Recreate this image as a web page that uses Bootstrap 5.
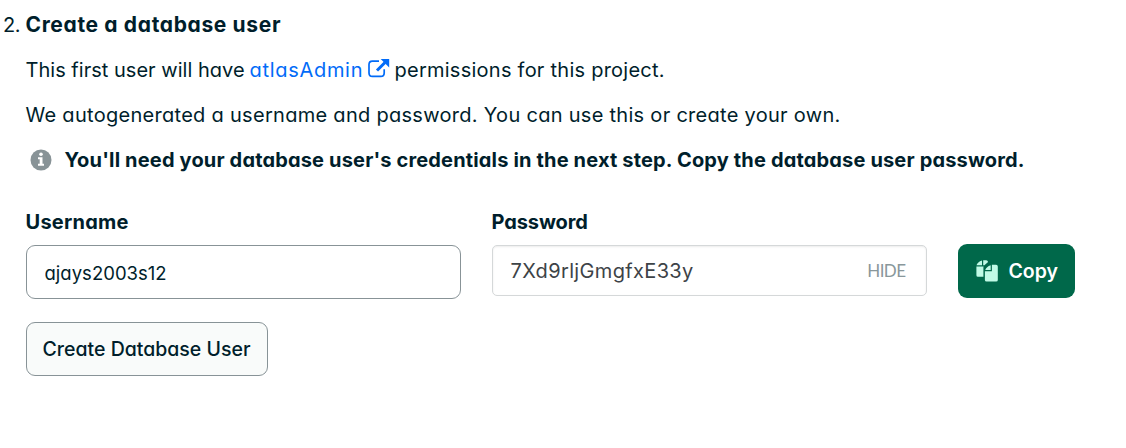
<!DOCTYPE html>
<html lang="en">
<head>
<meta charset="utf-8">
<title>Create a database user</title>
<link href="https://cdn.jsdelivr.net/npm/bootstrap@5.3.0/dist/css/bootstrap.min.css" rel="stylesheet">
<style>
body{font-family:Inter,"Liberation Sans",sans-serif;font-feature-settings:"cv11";font-size:20px;color:#001e2b;background:#fff;white-space:nowrap}
input,button{font-feature-settings:inherit}
.step{padding:2px 0 0 3px}
.step-number{width:22.5px;font-size:20px;letter-spacing:-.5px}
.line{height:45px;line-height:46px;margin:0}
.title-line{font-size:21px;letter-spacing:.65px;font-weight:700;line-height:45px}
.intro{width:224px;letter-spacing:.02px}
.doc-link{color:#016bf8;width:145px;letter-spacing:.7px}
.doc-link svg{margin:-1px 0 0 5px}
.perm{letter-spacing:.25px}
.auto{letter-spacing:.29px}
.note{letter-spacing:.16px;font-weight:700}
.note svg{margin:0 12.5px 0 4.5px}
.fields{margin-top:29px;gap:31px}
.field{width:435px}
.field label{height:34px;line-height:22px;font-weight:700;letter-spacing:.25px}
.field .pass-label{letter-spacing:-.1px}
.user-input{height:54px;border:1px solid #889397;border-radius:9px;padding:2px 18px 0;font-size:18.5px;letter-spacing:.02px;color:#001e2b}
.pass-box{height:51px;border:1px solid #d5d8d9;border-radius:5px;box-shadow:inset 0 1px 2px rgba(0,0,0,.08);padding:0 20px 0 18px;color:#3d4347}
.pass-box .secret{letter-spacing:.35px}
.hide-btn{font-family:Lato,sans-serif;font-size:17px;letter-spacing:-.55px;color:#89979b}
.copy-btn{width:117px;height:54px;margin-top:33px;background:#00684a;border-radius:9px;color:#fff;font-size:19.5px;font-weight:600;padding:1px 16.5px 0 18px}
.copy-btn svg{margin-top:-2px}
.copy-btn:hover{background:#00593f;color:#fff}
.create-btn{width:242px;height:54px;margin-top:23px;border:1px solid #889397;border-radius:9px;background:#f9fbfa;color:#001e2b;font-size:19.5px;font-weight:500;padding:1px 0 0;letter-spacing:0}
</style>
</head>
<body>
<main class="step d-flex align-items-start">
  <span class="step-number line flex-shrink-0">2.</span>
  <section>
    <h1 class="line title-line">Create a database user</h1>
    <p class="line d-flex">
      <span class="intro">This first user will have</span>
      <a href="#" class="doc-link d-flex align-items-center text-decoration-none">atlasAdmin
        <svg width="22" height="22" viewBox="0 0 22 22" fill="none" aria-hidden="true"><path d="M11 3.2H4.4Q1 3.2 1 6.6v8.4q0 3.4 3.4 3.4H12.8q3.4 0 3.4-3.4v-3.8" stroke="currentColor" stroke-width="1.7"/><path d="M9 12.5l8-8" stroke="currentColor" stroke-width="3"/><path d="M12.7 1h8.5v8.5z" fill="currentColor"/></svg></a>
      <span class="perm">permissions for this project.</span>
    </p>
    <p class="line auto">We autogenerated a username and password. You can use this or create your own.</p>
    <p class="line note d-flex align-items-center">
      <svg width="22" height="22" viewBox="0 0 22 22" aria-hidden="true"><circle cx="11" cy="11" r="10.5" fill="#889397"/><circle cx="11" cy="5.2" r="1.8" fill="#fff"/><path d="M8 8.3h4.5v6.5H14v2H8v-2h1.7v-4.5H8z" fill="#fff"/></svg>
      <span>You'll need your database user's credentials in the next step. Copy the database user password.</span>
    </p>
    <form class="m-0">
      <div class="fields d-flex align-items-start">
        <div class="field">
          <label for="user" class="d-block">Username</label>
          <input id="user" class="form-control user-input" type="text" value="ajays2003s12">
        </div>
        <div class="field">
          <label class="d-block pass-label">Password</label>
          <div class="pass-box d-flex align-items-center justify-content-between"><span class="secret">7Xd9rljGmgfxE33y</span><span class="hide-btn" role="button">HIDE</span></div>
        </div>
        <button type="button" class="btn copy-btn border-0 d-flex align-items-center justify-content-between">
          <svg width="22" height="22" viewBox="0 0 22 22" fill="#c0fae6" aria-hidden="true"><path d="M6 .6v4.7H.5Q1.5 2 6 .6zM7.2.3h3q1.5 0 1.9 1.6L8.4 5.3H7.2zM.4 6.5h7.2q-.2.7-.2 1.5v8.8H2Q.4 16.8.4 15.2zM14.7 5.2v4.9H9.2q1.2-3.4 5.5-4.9zM15.9 4.8h4.2q1.7 0 1.7 1.7v13.4q0 1.7-1.7 1.7h-9.5q-1.7 0-1.7-1.7v-8.6h7z"/></svg>
          <span>Copy</span>
        </button>
      </div>
      <button type="submit" class="btn create-btn d-block">Create Database User</button>
    </form>
  </section>
</main>
<script src="https://cdn.jsdelivr.net/npm/bootstrap@5.3.0/dist/js/bootstrap.bundle.min.js"></script>
</body>
</html>
